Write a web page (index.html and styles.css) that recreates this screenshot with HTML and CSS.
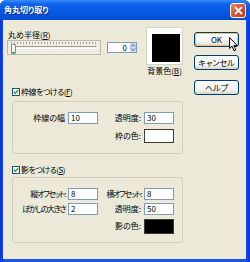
FILE: index.html
```html
<!DOCTYPE html>
<html lang="ja">
  <head>
    <meta charset="UTF-8" />
    <title>角丸切り取り</title>
    <link rel="stylesheet" href="styles.css">
  </head>
  <body>
    <div class="window">
      <!-- タイトルバー -->
      <div class="titlebar">
        <span class="title">角丸切り取り</span>
        <span class="close">
          <svg width="9" height="9" viewBox="0 0 9 9"><path d="M1.5 1.5 L7.5 7.5 M7.5 1.5 L1.5 7.5" stroke="#fff" stroke-width="1.8" stroke-linecap="round"/></svg>
        </span>
      </div>

      <div class="client">
        <div class="main">
          <!-- 半径と背景色 -->
          <div class="top">
            <div class="radius">
              <div class="label">丸め半径(<u>R</u>)</div>
              <div class="radius-row">
                <div class="slider">
                  <div class="ticks"></div>
                  <div class="track"></div>
                  <div class="thumb"></div>
                </div>
                <div class="spin">
                  <span class="spin-value">0</span>
                  <span class="spin-btn">
                    <svg width="6" height="9" viewBox="0 0 6 9"><path d="M1 3.5 L3 1.5 L5 3.5 M1 5.5 L3 7.5 L5 5.5" fill="none" stroke="#4D6185" stroke-width="1"/></svg>
                  </span>
                </div>
              </div>
            </div>
            <div class="bgcolor">
              <div class="swatch"><div class="swatch-fill"></div></div>
              <div class="caption">背景色(<u>B</u>)</div>
            </div>
          </div>

          <!-- 枠線 -->
          <div class="check">
            <span class="box"><svg width="6" height="6" viewBox="0 0 6 6"><path d="M0.8 2.8 L2.3 4.4 L5.2 1.2" fill="none" stroke="#21A121" stroke-width="1.3"/></svg></span>
            <span class="kana">枠線をつける(<u>F</u>)</span>
          </div>
          <div class="group">
            <span class="name">枠線の幅</span>
            <span class="input">10</span>
            <span class="name">透明度:</span>
            <span class="input">30</span>
            <span></span>
            <span></span>
            <span class="name">枠の色:</span>
            <span class="color white"></span>
          </div>

          <!-- 影 -->
          <div class="check shadow-check">
            <span class="box"><svg width="6" height="6" viewBox="0 0 6 6"><path d="M0.8 2.8 L2.3 4.4 L5.2 1.2" fill="none" stroke="#21A121" stroke-width="1.3"/></svg></span>
            <span class="kana">影をつける(<u>S</u>)</span>
          </div>
          <div class="group shadow-group">
            <span class="name narrow">縦オフセット:</span>
            <span class="input">8</span>
            <span class="name narrow">横オフセット:</span>
            <span class="input">8</span>
            <span class="name narrow">ぼかしの大きさ</span>
            <span class="input">2</span>
            <span class="name">透明度:</span>
            <span class="input">50</span>
            <span></span>
            <span></span>
            <span class="name">影の色:</span>
            <span class="color black"></span>
          </div>
        </div>

        <!-- ボタン -->
        <div class="buttons">
          <button class="btn default">OK</button>
          <button class="btn">キャンセル</button>
          <button class="btn">ヘルプ</button>
        </div>
      </div>

      <!-- マウスカーソル -->
      <svg class="cursor" width="10" height="15" viewBox="0 0 10 15">
        <path d="M0.5 0.5 L0.5 11.5 L3 9.2 L5 13.8 L6.8 13 L4.8 8.6 L8.3 8.6 Z" fill="#fff" stroke="#000" stroke-width="1" stroke-linejoin="round"/>
      </svg>
    </div>
  </body>
</html>
```

FILE: styles.css
```css
* {
  margin: 0;
  padding: 0;
  box-sizing: border-box;
}

body {
  width: 250px;
  height: 262px;
  overflow: hidden;
  font-family: "Noto Sans CJK JP", "Noto Sans", sans-serif;
  font-size: 8px;
  line-height: 10px;
  color: #000;
  font-feature-settings: "palt";
}

/* XP window */
.window {
  position: relative;
  width: 250px;
  height: 262px;
  display: flex;
  flex-direction: column;
  background: linear-gradient(90deg, #0831D9, #1657E6 2%, #1657E6 98%, #0831D9);
  border-radius: 6px 6px 0 0;
}

.titlebar {
  flex: none;
  height: 20px;
  display: flex;
  align-items: center;
  justify-content: space-between;
  padding: 0 4px;
  border-radius: 6px 6px 0 0;
  background: linear-gradient(#3A8CFA, #0F63EE 20%, #0457E3 60%, #0A4ED0);
}

.title {
  color: #fff;
  font-weight: bold;
  text-shadow: 1px 1px #0B2C85;
}

.close {
  width: 16px;
  height: 15px;
  border: 1px solid #fff;
  border-radius: 3px;
  background: linear-gradient(135deg, #EE8A68, #D8532E 50%, #C4391A);
  display: flex;
  align-items: center;
  justify-content: center;
}

.client {
  flex: 1;
  display: flex;
  align-items: flex-start;
  margin: 0 4px 3px 3px;
  padding: 7px 0 0 4px;
  background: #ECE9D8;
}

.main {
  width: 176px;
}

.top {
  display: flex;
  align-items: flex-start;
}

.radius {
  width: 130px;
  padding-top: 3px;
}

.label {
  padding-left: 1px;
}

.radius-row {
  display: flex;
  align-items: center;
  gap: 6px;
}

/* slider */
.slider {
  position: relative;
  width: 94px;
  height: 15px;
  border: 1px solid #BDBAA9;
  background: #EFEDE3;
}

.ticks {
  margin: 1px 3px 0;
  height: 2px;
  background: repeating-linear-gradient(90deg, #A5A493 0 1px, transparent 1px 3px);
}

.track {
  margin: 2px 3px 0;
  height: 3px;
  border: 1px solid;
  border-color: #9D9C92 #fff #fff #9D9C92;
  background: #F4F3EE;
}

.thumb {
  position: absolute;
  left: 3px;
  top: 3px;
  width: 5px;
  height: 10px;
  border: 1px solid #8B8B7A;
  border-radius: 1px;
  background: linear-gradient(#FFFFFF, #ECEBE2);
  box-shadow: inset 0 -1px #2FB53A;
}

.spin {
  width: 30px;
  height: 11px;
  display: flex;
  border: 1px solid #7F9DB9;
  background: #fff;
}

.spin-value {
  flex: 1;
  text-align: right;
  padding-right: 3px;
  line-height: 9px;
}

.spin-btn {
  width: 6px;
  background: #C9D7FA;
  display: flex;
  align-items: center;
}

.bgcolor {
  width: 37px;
  margin-left: 9px;
  display: flex;
  flex-direction: column;
  align-items: center;
}

.swatch {
  width: 37px;
  height: 38px;
  padding: 6px 2px 2px 5px;
  background: #fff;
  border: 1px solid #D8D5C6;
}

.swatch-fill {
  width: 100%;
  height: 100%;
  background: #000;
}

.caption {
  margin-top: 1px;
}

/* checkboxes */
.check {
  display: flex;
  align-items: center;
  gap: 1px;
  height: 10px;
  margin: 11px 0 0 5px;
}

.box {
  width: 8px;
  height: 8px;
  border: 1px solid #1C5180;
  background: #F4F4EF;
  display: flex;
  align-items: center;
  justify-content: center;
}

.kana {
  letter-spacing: -0.5px;
}

.shadow-check {
  margin-top: 11px;
}

/* group boxes */
.group {
  width: 171px;
  margin: 4px 0 0 5px;
  padding: 10px 0;
  border: 1px solid #D0D0BF;
  border-radius: 3px;
  display: grid;
  grid-template-columns: 55px 30px 46px 30px;
  grid-template-rows: 12px 14px;
  row-gap: 5px;
  align-items: center;
}

.shadow-group {
  margin-top: 2px;
  padding-bottom: 9px;
  grid-template-rows: 12px 12px 15px;
  row-gap: 3px;
}

.name {
  text-align: right;
  padding-right: 3px;
  white-space: nowrap;
}

.name.narrow {
  letter-spacing: -1.4px;
}

.input {
  height: 12px;
  padding-left: 2px;
  line-height: 10px;
  border: 1px solid #7F9DB9;
  background: #fff;
}

.color {
  height: 100%;
  border: 1px solid #3A3A3A;
}

.color.white {
  background: #fff;
}

.color.black {
  background: #000;
  margin-top: 1px;
}

/* buttons */
.buttons {
  margin-left: 11px;
  padding-top: 5px;
  display: flex;
  flex-direction: column;
}

.btn {
  width: 45px;
  height: 15px;
  border: 1px solid #003C74;
  border-radius: 3px;
  background: linear-gradient(#FFFFFF, #F3F3EF 70%, #D9D4C9);
  font: inherit;
  line-height: 13px;
  color: #000;
}

.btn:nth-child(2) {
  margin-top: 8px;
}

.btn:nth-child(3) {
  margin-top: 10px;
}

.btn.default {
  box-shadow: inset 0 0 0 1px #F7C466;
}

.cursor {
  position: absolute;
  left: 229px;
  top: 37px;
}
```
